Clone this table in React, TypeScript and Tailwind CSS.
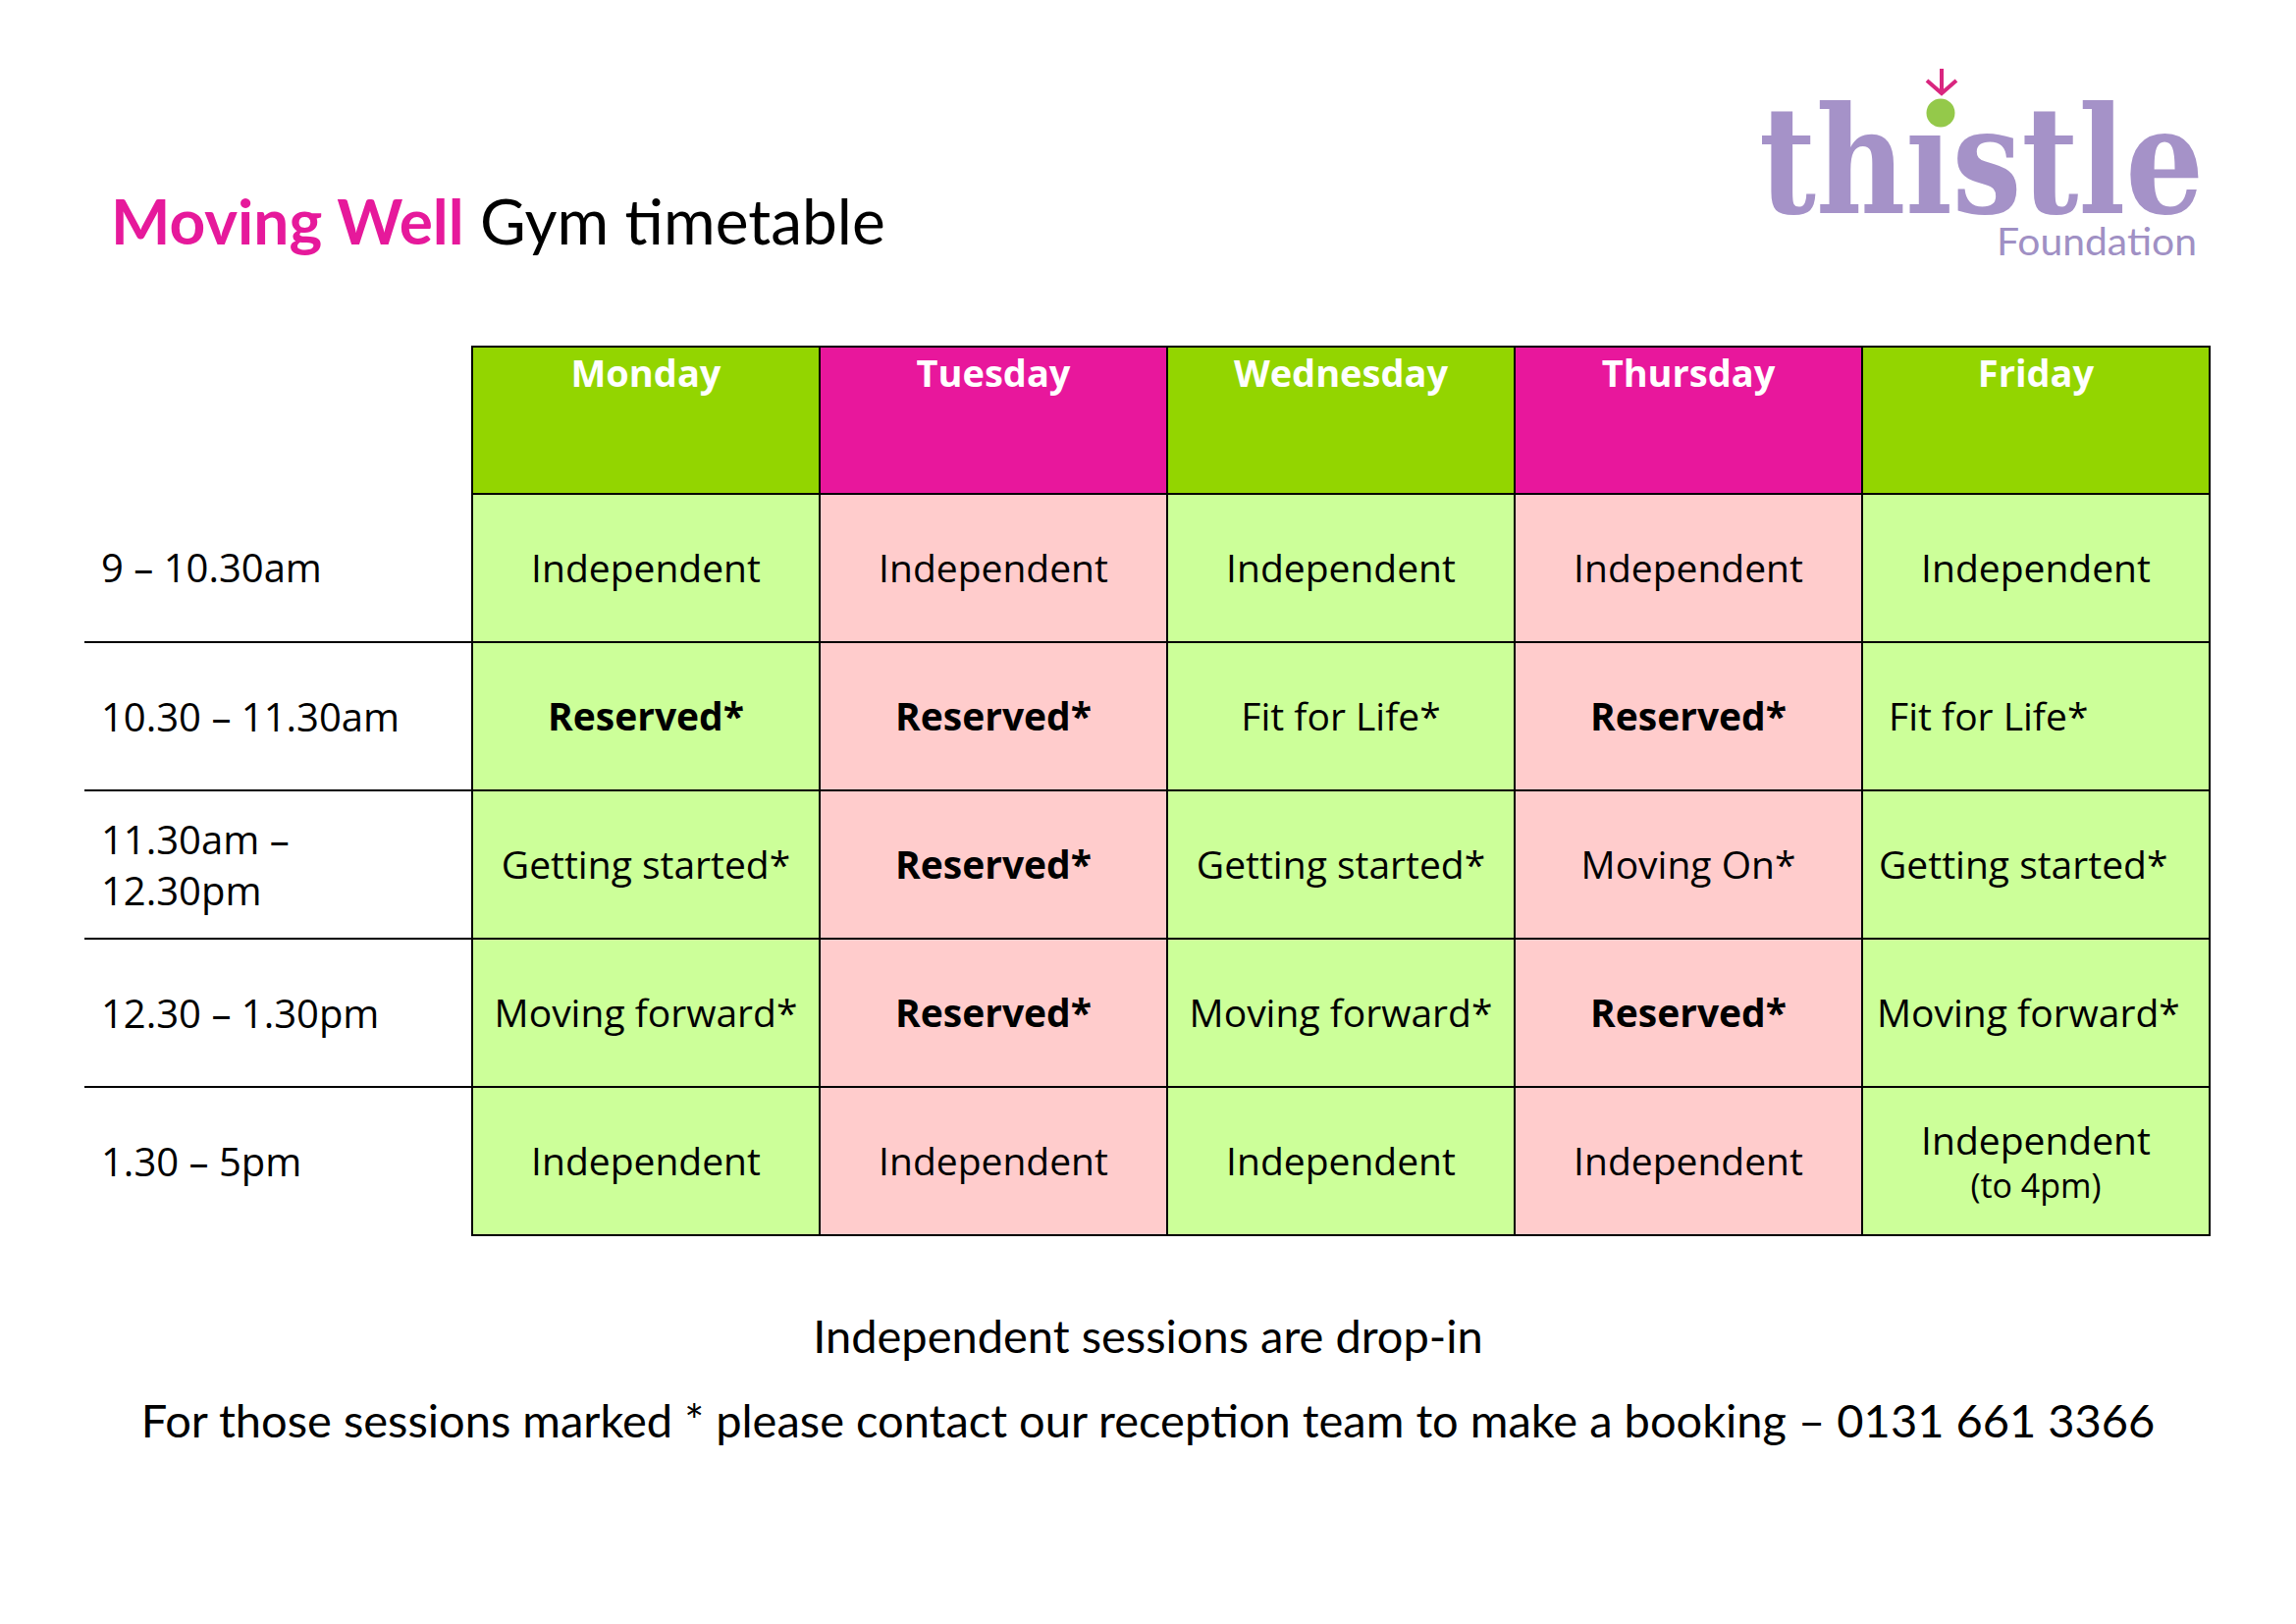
type Cell = { text: string; bold?: boolean; sub?: string; pad?: string }

const days = [
  { name: 'Monday', head: 'bg-[#93d500]', body: 'bg-[#ccff99]' },
  { name: 'Tuesday', head: 'bg-[#e8179c]', body: 'bg-[#ffcccc]' },
  { name: 'Wednesday', head: 'bg-[#93d500]', body: 'bg-[#ccff99]' },
  { name: 'Thursday', head: 'bg-[#e8179c]', body: 'bg-[#ffcccc]' },
  { name: 'Friday', head: 'bg-[#93d500]', body: 'bg-[#ccff99]' },
]

const rows: { time: string[]; cells: Cell[] }[] = [
  {
    time: ['9 – 10.30am'],
    cells: [
      { text: 'Independent' },
      { text: 'Independent' },
      { text: 'Independent' },
      { text: 'Independent' },
      { text: 'Independent' },
    ],
  },
  {
    time: ['10.30 – 11.30am'],
    cells: [
      { text: 'Reserved*', bold: true },
      { text: 'Reserved*', bold: true },
      { text: 'Fit for Life*' },
      { text: 'Reserved*', bold: true },
      { text: 'Fit for Life*', pad: 'text-left pl-[26px]' },
    ],
  },
  {
    time: ['11.30am –', '12.30pm'],
    cells: [
      { text: 'Getting started*' },
      { text: 'Reserved*', bold: true },
      { text: 'Getting started*' },
      { text: 'Moving On*' },
      { text: 'Getting started*', pad: 'text-left pl-[16px]' },
    ],
  },
  {
    time: ['12.30 – 1.30pm'],
    cells: [
      { text: 'Moving forward*' },
      { text: 'Reserved*', bold: true },
      { text: 'Moving forward*' },
      { text: 'Reserved*', bold: true },
      { text: 'Moving forward*', pad: 'text-left pl-[14px]' },
    ],
  },
  {
    time: ['1.30 – 5pm'],
    cells: [
      { text: 'Independent' },
      { text: 'Independent' },
      { text: 'Independent' },
      { text: 'Independent' },
      { text: 'Independent', sub: '(to 4pm)' },
    ],
  },
]

function ThistleLogo() {
  return (
    <svg width="500" height="220" viewBox="0 0 500 220" className="mt-[60px] mr-[59px] shrink-0">
      <text
        x="12"
        y="157"
        fill="#a592c8"
        fontSize="151"
        fontWeight="700"
        fontFamily="'DejaVu Serif', serif"
        textLength="453"
        lengthAdjust="spacingAndGlyphs"
      >
        thıstle
      </text>
      <circle cx="197" cy="55" r="14.5" fill="#94c94a" />
      <path d="M198 10 V35 M183 22 L198 35 L213 22" fill="none" stroke="#d9267f" strokeWidth="4" />
      <text
        x="254"
        y="200"
        fill="#a090c4"
        fontSize="39"
        fontFamily="Lato, sans-serif"
        textLength="204"
        lengthAdjust="spacingAndGlyphs"
      >
        Foundation
      </text>
    </svg>
  )
}

export default function App() {
  return (
    <div className="w-[2339px] min-h-[1654px] bg-white text-black">
      {/* Header */}
      <div className="flex justify-between h-[352px]">
        <h1 className="pl-[113px] pt-[193px] text-[64px] leading-none font-['Lato',sans-serif] whitespace-nowrap">
          <span className="font-bold text-[#e6199b]">Moving Well</span>{' '}
          <span className="font-normal">Gym timetable</span>
        </h1>
        <ThistleLogo />
      </div>

      {/* Timetable */}
      <table className="ml-[86px] border-collapse table-fixed font-['Open_Sans',sans-serif]">
        <colgroup>
          <col className="w-[395px]" />
          <col className="w-[354px]" />
          <col className="w-[354px]" />
          <col className="w-[354px]" />
          <col className="w-[354px]" />
          <col className="w-[354px]" />
        </colgroup>
        <thead>
          <tr className="h-[150px]">
            <th className="p-0" />
            {days.map((d) => (
              <th
                key={d.name}
                className={`${d.head} border-2 border-black align-top pt-[6px] text-white text-[38px] font-bold leading-none text-center`}
              >
                {d.name}
              </th>
            ))}
          </tr>
        </thead>
        <tbody>
          {rows.map((r, i) => (
            <tr key={i} className="h-[151px]">
              <td
                className={`${i < rows.length - 1 ? 'border-b-2' : ''} border-black pl-[17px] align-middle text-[40px] leading-[52px] whitespace-nowrap`}
              >
                {r.time.map((t) => (
                  <div key={t}>{t}</div>
                ))}
              </td>
              {r.cells.map((c, j) => (
                <td
                  key={j}
                  className={`${days[j].body} border-2 border-black align-middle text-[39px] whitespace-nowrap ${
                    c.pad ?? 'text-center'
                  } ${c.bold ? 'font-bold' : 'font-normal'}`}
                >
                  {c.sub ? (
                    <>
                      <div className="leading-[48px]">{c.text}</div>
                      <div className="text-[34px] leading-[44px]">{c.sub}</div>
                    </>
                  ) : (
                    <span className="leading-none">{c.text}</span>
                  )}
                </td>
              ))}
            </tr>
          ))}
        </tbody>
      </table>

      {/* Notes */}
      <div className="mt-[78px] flex flex-col items-center gap-[39px] font-['Lato',sans-serif] text-[47px] leading-none">
        <p>Independent sessions are drop-in</p>
        <p>For those sessions marked * please contact our reception team to make a booking – 0131 661 3366</p>
      </div>
    </div>
  )
}
